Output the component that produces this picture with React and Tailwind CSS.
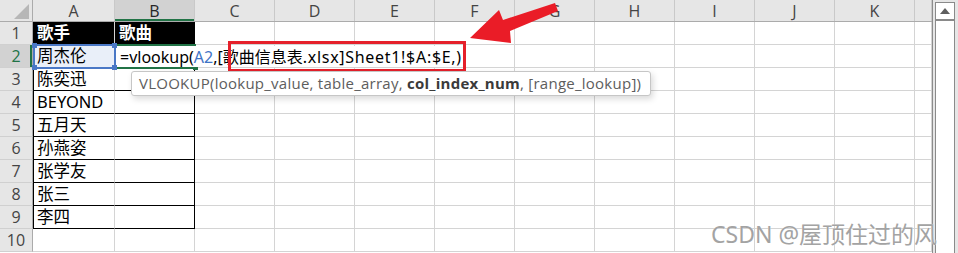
import React from "react";

const cols = [
  { l: "A", w: "w-[82px]" },
  { l: "B", w: "w-[80px]" },
  { l: "C", w: "w-[80px]" },
  { l: "D", w: "w-[80px]" },
  { l: "E", w: "w-[80px]" },
  { l: "F", w: "w-[80px]" },
  { l: "G", w: "w-[80px]" },
  { l: "H", w: "w-[80px]" },
  { l: "I", w: "w-[80px]" },
  { l: "J", w: "w-[80px]" },
  { l: "K", w: "w-[80px]" },
  { l: "", w: "w-[17px]" },
];

const data = {
  1: ["歌手", "歌曲"],
  2: ["周杰伦", ""],
  3: ["陈奕迅", ""],
  4: ["BEYOND", ""],
  5: ["五月天", ""],
  6: ["孙燕姿", ""],
  7: ["张学友", ""],
  8: ["张三", ""],
  9: ["李四", ""],
};

const cellFont = { fontFamily: '"Noto Sans", "Noto Sans CJK SC", sans-serif' };
const uiFont = { fontFamily: '"Open Sans", "Noto Sans", sans-serif' };

function Cell({ r, ci, w }) {
  const inTable = r <= 9 && ci <= 1;
  const header = r === 1 && ci <= 1;
  let cls = `${w} h-[23px] shrink-0 box-border border-r border-b border-[#d4d4d4] flex items-center pl-[4px] overflow-hidden whitespace-nowrap text-[16.5px] text-black`;
  if (inTable) cls += " border-b-black";
  if (inTable && ci === 1) cls += " border-r-black";
  if (inTable && ci === 0) cls += " shadow-[inset_1px_0_0_#000]";
  if (header) cls += " bg-black text-white font-bold";
  if (r === 2 && ci === 0) cls += " bg-[#e9eff9]";
  const txt = data[r] && ci <= 1 ? data[r][ci] : "";
  return (
    <div className={cls} style={cellFont}>
      {txt}
    </div>
  );
}

export default function App() {
  const rows = [1, 2, 3, 4, 5, 6, 7, 8, 9, 10];
  return (
    <div className="relative w-[958px] h-[253px] overflow-hidden bg-[#e6e6e6] flex">
      {/* sheet */}
      <div className="w-[933px] h-full flex flex-col bg-white border-r border-[#8c8c8c]">
        {/* column header */}
        <div className="flex h-[22px] shrink-0 bg-[#e6e6e6] border-b border-[#ababab]" style={uiFont}>
          <div className="w-[33px] h-full shrink-0 box-border border-r border-[#ababab] relative">
            <svg width="33" height="21" className="absolute left-0 top-0">
              <polygon points="14,19 29,19 29,4" fill="#b7b7b7" />
            </svg>
          </div>
          {cols.map((c, i) => (
            <div
              key={i}
              className={`${c.w} h-full shrink-0 box-border border-r border-[#c9c9c9] flex items-center justify-center text-[16px] ${
                i === 1 ? "bg-[#d2d2d2] text-[#262626] shadow-[inset_0_-2px_0_#217346]" : "text-[#444]"
              }`}
            >
              {c.l}
            </div>
          ))}
        </div>
        {rows.map((r) => (
          <div key={r} className="flex h-[23px] shrink-0">
            <div
              className={`w-[33px] h-[23px] shrink-0 box-border border-r border-b border-r-[#ababab] border-b-[#d0d0d0] flex items-center justify-center text-[16px] ${
                r === 2 ? "bg-[#d2d2d2] text-[#217346] shadow-[inset_-2px_0_0_#217346]" : "bg-[#e6e6e6] text-[#444]"
              }`}
              style={uiFont}
            >
              {r}
            </div>
            {cols.map((c, ci) => (
              <Cell key={ci} r={r} ci={ci} w={c.w} />
            ))}
          </div>
        ))}
      </div>

      {/* scrollbar */}
      <div className="ml-[2px] mt-[2px] w-[20px] h-[260px] box-border border border-[#8a8a8a] bg-white flex flex-col">
        <div className="h-[18px] box-border border-b-2 border-[#8a8a8a] flex items-center justify-center">
          <svg width="10" height="6">
            <polygon points="0,6 10,6 5,0" fill="#5f5f5f" />
          </svg>
        </div>
      </div>

      {/* A2 reference highlight border */}
      <div className="absolute left-[33px] top-[44px] w-[83px] h-[25px] border-2 border-[#4a78c6] pointer-events-none" />
      <div className="absolute left-[32px] top-[43px] w-[5px] h-[5px] bg-[#4a78c6]" />
      <div className="absolute left-[112px] top-[43px] w-[5px] h-[5px] bg-[#4a78c6]" />
      <div className="absolute left-[32px] top-[65px] w-[5px] h-[5px] bg-[#4a78c6]" />
      <div className="absolute left-[112px] top-[65px] w-[5px] h-[5px] bg-[#4a78c6]" />

      {/* B2 edit box */}
      <div className="absolute left-[117px] top-[44px] w-[79px] h-[2px] bg-[#217346]" />
      <div className="absolute left-[117px] top-[67px] w-[78px] h-[2px] bg-[#217346]" />
      <div className="absolute left-[193px] top-[65px] w-[5px] h-[5px] bg-[#217346]" />
      <div
        className="absolute left-[117px] top-[46px] h-[21px] pr-[4px] bg-white flex items-center whitespace-nowrap text-[16px] text-black"
        style={cellFont}
      >
        <span className="pl-[3px]">=vlookup(</span>
        <span className="text-[#3f74c6]">A2</span>
        <span>,[歌曲信息表</span>
        <span className="tracking-[0.7px]">.xlsx]Sheet1!$A:$E,)</span>
      </div>

      {/* red box */}
      <div className="absolute left-[228px] top-[41px] w-[238px] h-[31px] border-[3px] border-[#e5202a]" />

      {/* tooltip */}
      <div
        className="absolute left-[131px] top-[71px] w-[520px] h-[25px] bg-white border border-[#c6c6c6] rounded-[3px] shadow-[2px_3px_6px_rgba(0,0,0,0.15)] flex items-center pl-[7px] whitespace-nowrap text-[15px] tracking-[0.25px] text-[#5d5d5d]"
        style={uiFont}
      >
        VLOOKUP(lookup_value, table_array,&nbsp;<b className="text-[#3a3a3a]">col_index_num</b>, [range_lookup])
      </div>

      {/* arrow */}
      <svg className="absolute left-0 top-0 pointer-events-none" width="958" height="253">
        <polygon
          points="470,38 499,10 503,20 555,3 558,11 510,31 511,43"
          fill="#ea1c27"
        />
      </svg>

      {/* watermark */}
      <div
        className="absolute left-[711px] top-[217px] text-[23px] text-[#a3a3a3] whitespace-nowrap [text-shadow:0_0_1px_#fff]"
        style={{ fontFamily: '"Noto Sans", "Noto Sans CJK SC", sans-serif' }}
      >
        CSDN @屋顶住过的风
      </div>
    </div>
  );
}
